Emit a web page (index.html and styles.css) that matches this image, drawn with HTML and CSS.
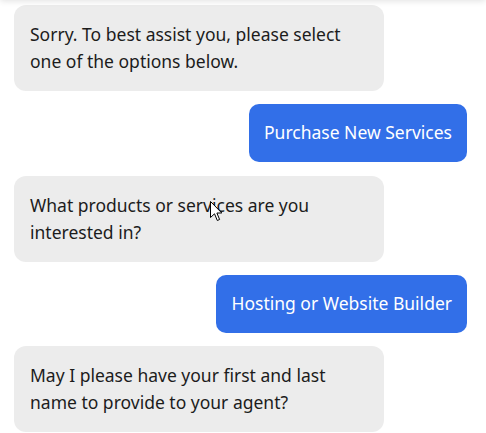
FILE: index.html
```html
<!DOCTYPE html>
<html>
<head>
<meta charset="utf-8">
<link rel="stylesheet" href="styles.css">
</head>
<body>
<div class="topbar"></div>
<div class="chat">
  <div class="msg bot">Sorry. To best assist you, please select one of the options below.</div>
  <div class="msg user">Purchase New Services</div>
  <div class="msg bot">What products or services are you interested in?</div>
  <div class="msg user">Hosting or Website Builder</div>
  <div class="msg bot">May I please have your first and last name to provide to your agent?</div>
</div>
<svg class="cursor" width="13" height="21" viewBox="0 0 13 21">
  <path d="M0.5 0.5 L0.5 16.5 L4.5 12.8 L7.3 19.5 L9.6 18.5 L6.9 12 L11.8 12 Z" fill="#ffffff" stroke="#000000" stroke-width="1" stroke-linejoin="miter"/>
</svg>
</body>
</html>
```
FILE: styles.css
```css
html, body {
  margin: 0;
  padding: 0;
  background: #ffffff;
  overflow: hidden;
}
body {
  font-family: "Noto Sans", "Open Sans", sans-serif;
  color: #1c1c1c;
  width: 486px;
  height: 433px;
  position: relative;
}
.topbar {
  position: absolute;
  top: -10px;
  left: 0;
  right: 0;
  height: 10px;
  box-shadow: 0 1px 6px rgba(0,0,0,0.12);
}
.chat {
  display: flex;
  flex-direction: column;
  gap: 13.3px;
  padding: 5px 19px 0 14px;
}
.msg {
  font-size: 17.5px;
  line-height: 27px;
  box-sizing: border-box;
}
.bot {
  align-self: flex-start;
  width: 370px;
  background: #ececec;
  border-radius: 12px;
  padding: 16px;
}
.user {
  align-self: flex-end;
  background: #326fe8;
  color: #ffffff;
  border-radius: 10px;
  padding: 15px 15px 16px 15px;
}
.cursor {
  position: absolute;
  left: 210px;
  top: 201px;
}
```
